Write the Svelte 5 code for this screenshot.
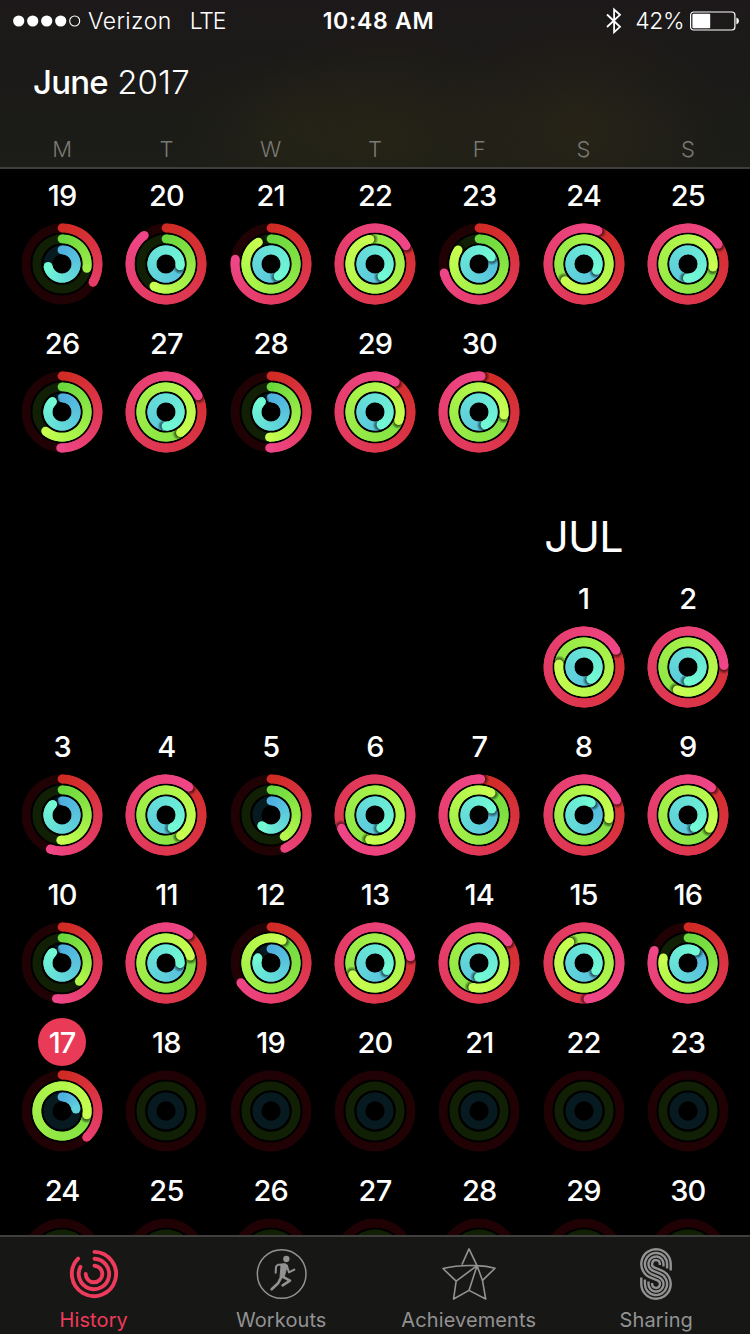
<script>
  const weekdays = ["M", "T", "W", "T", "F", "S", "S"];

  // each day: [number, move, exercise, stand], 1 = goal reached once
  const june = [
    [
      [19, 0.335, 0.278, 0.723],
      [20, 0.897, 0.58, 1.27],
      [21, 0.772, 0.917, 1.415],
      [22, 1.166, 1.968, 1.418],
      [23, 0.71, 0.845, 1.168],
      [24, 1.064, 1.636, 1.325],
      [25, 1.158, 1.27, 1.508],
    ],
    [
      [26, 0.506, 0.613, 0.883],
      [27, 1.176, 1.403, 1.5],
      [28, 0.506, 0.51, 0.883],
      [29, 1.095, 1.306, 1.43],
      [30, 1.01, 1.27, 1.43],
      null,
      null,
    ],
  ];

  const july = [
    [null, null, null, null, null, [1, 1.174, 1.77, 1.42], [2, 1.244, 1.571, 1.5]],
    [
      [3, 0.553, 0.508, 0.886],
      [4, 1.11, 1.403, 1.43],
      [5, 0.438, 0.413, 0.614],
      [6, 1.69, 1.535, 1.434],
      [7, 1.008, 1.08, 1.18],
      [8, 1.182, 1.275, 1.087],
      [9, 1.114, 1.34, 1.425],
    ],
    [
      [10, 0.525, 0.38, 0.886],
      [11, 1.108, 1.207, 1.258],
      [12, 0.658, 1.074, 0.81],
      [13, 1.223, 1.674, 1.34],
      [14, 1.15, 1.54, 1.505],
      [15, 1.483, 1.906, 1.344],
      [16, 0.807, 0.783, 1.09],
    ],
    [[17, 0.38, 1.275, 0.228], ...[18, 19, 20, 21, 22, 23].map(n => [n, 0, 0, 0])],
    [24, 25, 26, 27, 28, 29, 30].map(n => [n, 0, 0, 0]),
  ];

  const today = 17;

  const rings = [
    { r: 36, w: 8.8, from: [208, 43, 36], to: [239, 70, 137], track: "#200205" },
    { r: 25.2, w: 8.7, from: [108, 216, 62], to: [200, 255, 80], track: "#112005" },
    { r: 14.1, w: 8.9, from: [80, 176, 224], to: [114, 250, 212], track: "#071a20" },
  ];

  const STEP = 1 / 48;

  function point(r, t) {
    const a = t * 2 * Math.PI;
    return [(r * Math.sin(a)).toFixed(3), (-r * Math.cos(a)).toFixed(3)];
  }

  function color(ring, value, t) {
    const k = (t / value) * Math.min(1, value * 2);
    return `rgb(${ring.from.map((c, i) => Math.round(c + (ring.to[i] - c) * k)).join(",")})`;
  }

  // short arcs, each reaching over the next one; only the last full turn is visible
  function segments(ring, value) {
    const out = [];
    for (let t = Math.max(0, value - 1); t < value; t += STEP) {
      const end = Math.min(value, t + STEP * 2);
      const [x1, y1] = point(ring.r, t);
      const [x2, y2] = point(ring.r, end);
      out.push({
        d: `M${x1} ${y1}A${ring.r} ${ring.r} 0 0 1 ${x2} ${y2}`,
        stroke: color(ring, value, t),
      });
    }
    return out;
  }

  function annulus(r, w) {
    return [r + w / 2, r - w / 2]
      .map(q => `M0 ${-q}A${q} ${q} 0 1 1 0 ${q}A${q} ${q} 0 1 1 0 ${-q}Z`)
      .join("");
  }

  const stripes = [[14.7, 3.9, 6.5, 1], [11.1, 7.5, 4.5, 2.5], [7.5, 11.1, 2.5, 4.5], [3.9, 14.7, 1, 6.5]];

  function stripe([a, b, s, e]) {
    const [nx, ny] = [0.367, 0.93];
    return `M${16 + a} ${16 + s}V16A${a} ${a} 0 1 0 ${16 - a * nx} ${16 + a * ny}`
      + `L${16 + b * nx} ${36 - b * ny}A${b} ${b} 0 1 1 ${16 - b} 36V${36 - e}`;
  }
</script>

{#snippet activity(values)}
  <svg class="rings" viewBox="-41 -41 82 82">
    {#each rings as ring, i}
      {@const v = values[i]}
      <circle r={ring.r} fill="none" stroke={ring.track} stroke-width={ring.w} />
      {#if v > 0}
        {@const [tx, ty] = point(ring.r, v)}
        {@const [sx, sy] = point(ring.r, v + 1.6 / (2 * Math.PI * ring.r))}
        {#if v < 1}
          <circle cx="0" cy={-ring.r} r={ring.w / 2} fill={color(ring, v, 0)} />
        {/if}
        {#each segments(ring, v) as s, n}
          <path d={s.d} fill="none" stroke={s.stroke} stroke-width={ring.w} />
          {#if n === 10 && v > 0.8}
            <g clip-path="url(#clip{i})">
              <circle cx={sx} cy={sy} r="7" fill="url(#shade)" />
            </g>
          {/if}
        {/each}
        <circle cx={tx} cy={ty} r={ring.w / 2} fill={color(ring, v, v)} />
      {/if}
    {/each}
  </svg>
{/snippet}

{#snippet week(days)}
  <div class="week">
    {#each days as day}
      <div class="day">
        {#if day}
          <div class="num"><span class:today={day[0] === today && day[1] > 0}>{day[0]}</span></div>
          {@render activity(day.slice(1))}
        {/if}
      </div>
    {/each}
  </div>
{/snippet}

<svg class="defs" aria-hidden="true">
  <defs>
    <radialGradient id="shade">
      <stop offset="0.45" stop-color="#000" stop-opacity="0.6" />
      <stop offset="1" stop-color="#000" stop-opacity="0" />
    </radialGradient>
    {#each rings as ring, i}
      <clipPath id="clip{i}"><path d={annulus(ring.r, ring.w)} clip-rule="evenodd" /></clipPath>
    {/each}
  </defs>
</svg>

<main>
  <header>
    <div class="status">
      <div class="carrier">
        <svg width="68" height="12" viewBox="0 0 68 12">
          {#each [0, 1, 2, 3] as n}
            <circle cx={5.7 + n * 14} cy="6" r="5.6" fill="#fff" />
          {/each}
          <circle cx="61.7" cy="6" r="5" fill="none" stroke="#fff" stroke-width="1.1" />
        </svg>
        <span class="name">Verizon</span>
        <span class="net">LTE</span>
      </div>
      <div class="clock">10:48 AM</div>
      <div class="power">
        <svg width="16" height="28" viewBox="0 0 16 28">
          <path d="M1 7.5L14 19.8L8.1 25.2V2.6L14 7.8L1 20" fill="none" stroke="#fff" stroke-width="1.8" />
        </svg>
        <span class="pct">42%</span>
        <svg width="50" height="20" viewBox="0 0 50 20">
          <rect x="0.6" y="1" width="44.3" height="18" rx="3" fill="none" stroke="#fff" stroke-width="1.2" />
          <rect x="2.4" y="2.8" width="17.8" height="14.4" rx="1" fill="#fff" />
          <path d="M46.4 6.6Q49 7.5 49 10T46.4 13.4Z" fill="#fff" />
        </svg>
      </div>
    </div>
    <h1><b>June</b> 2017</h1>
    <div class="weekdays">
      {#each weekdays as w}
        <span>{w}</span>
      {/each}
    </div>
  </header>

  <section class="calendar">
    {#each june as days}
      {@render week(days)}
    {/each}
    <div class="month"><span>JUL</span></div>
    {#each july as days}
      {@render week(days)}
    {/each}
  </section>

  <nav>
    <div class="tab active">
      <svg width="54" height="54" viewBox="-27 -27 54 54" fill="none" stroke="currentColor" stroke-width="3.9" stroke-linecap="round">
        <path d="M0.5 -22.1A22.1 22.1 0 1 1 -15.9 -15.4" />
        <path d="M0.5 -15.2A15.2 15.2 0 1 1 -13.5 -7.1" />
        <path d="M0.5 -8.3A8.3 8.3 0 1 1 -8.3 0" />
      </svg>
      <span>History</span>
    </div>
    <div class="tab">
      <svg width="54" height="54" viewBox="-8 -6 162 162" fill="none" stroke="currentColor" stroke-linecap="round" stroke-linejoin="round">
        <circle cx="75" cy="75" r="73" stroke-width="4.5" />
        <circle cx="89" cy="30" r="9.5" fill="currentColor" stroke="none" />
        <path d="M64 46L85 44L93 49L88 64L82 86L70 84L73 52Z" fill="currentColor" stroke-width="3" />
        <path d="M63 48L58 53L57 71" stroke-width="6" />
        <path d="M91 52L97 70L113 62" stroke-width="6" />
        <path d="M76 82L100 95L78 109" stroke-width="8" />
        <path d="M73 86L64 103L45 121" stroke-width="8" />
      </svg>
      <span>Workouts</span>
    </div>
    <div class="tab">
      <svg width="58" height="56" viewBox="-4 -3 174 168" fill="none" stroke="currentColor" stroke-width="5" stroke-linejoin="round">
        <path d="M61 52L83 3L108 55Q137 56 164 63L125 101L135 159L83 132L35 159L43 103L2 64Q50 52 108 55" />
        <path d="M43 103L108 55L83 132M108 55L125 101" />
      </svg>
      <span>Achievements</span>
    </div>
    <div class="tab">
      <svg width="32" height="52" viewBox="0 0 32 52" fill="none" stroke="currentColor" stroke-width="2.4">
        {#each stripes as s}
          <path d={stripe(s)} />
        {/each}
      </svg>
      <span>Sharing</span>
    </div>
  </nav>
</main>

<style>
:global(body) {
  background: #000;
}

main {
  width: 750px;
  height: 1334px;
  display: flex;
  flex-direction: column;
  overflow: hidden;
  background: #000;
  color: #fff;
  font-family: Inter, "Liberation Sans", sans-serif;
}

.defs {
  position: absolute;
  width: 0;
  height: 0;
}

header {
  flex: none;
  height: 169px;
  box-sizing: border-box;
  border-bottom: 2px solid #3f3e3c;
  background:
    radial-gradient(ellipse 110px 80px at 280px 130px, rgba(44, 42, 20, 0.35), transparent),
    radial-gradient(ellipse 150px 110px at 385px 135px, rgba(44, 40, 20, 0.6), transparent),
    radial-gradient(ellipse 150px 110px at 575px 130px, rgba(46, 40, 22, 0.6), transparent),
    linear-gradient(#1d191a, #1b1a18 50%, #1c1d18);
}

.status {
  height: 42px;
  display: grid;
  grid-template-columns: 1fr auto 1fr;
  align-items: center;
  padding: 0 10px 0 13px;
  font-size: 23px;
}

.carrier, .power {
  display: flex;
  align-items: center;
}

.name {
  margin-left: 7px;
  font-weight: 350;
  letter-spacing: 0.4px;
}

.net {
  margin-left: 18px;
  font-weight: 350;
  letter-spacing: -1.1px;
}

.clock {
  margin-left: 4px;
  font-weight: 600;
  letter-spacing: 0.7px;
}

.power {
  justify-content: flex-end;
}

.pct {
  margin: 0 6px 0 13px;
  font-weight: 350;
  letter-spacing: -0.5px;
}

h1 {
  margin: 19px 0 0 33px;
  font-size: 33px;
  line-height: 42px;
  font-weight: 280;
  letter-spacing: 0.1px;
}

h1 b {
  font-weight: 550;
  letter-spacing: -0.8px;
}

.weekdays {
  display: grid;
  grid-template-columns: repeat(7, 1fr);
  margin-top: 32px;
  padding: 0 10px;
  font-size: 22px;
  line-height: 28px;
  font-weight: 300;
  text-align: center;
  color: #7a7974;
}

.calendar {
  flex: 1;
  min-height: 0;
  overflow: hidden;
  padding: 0 10px;
}

.week {
  display: grid;
  grid-template-columns: repeat(7, 1fr);
  height: 148px;
}

.day {
  display: flex;
  flex-direction: column;
  align-items: center;
}

.num {
  display: flex;
  align-items: center;
  box-sizing: border-box;
  height: 54px;
  padding-bottom: 2px;
  font-size: 29px;
  font-weight: 500;
  letter-spacing: -0.8px;
}

.today {
  width: 48px;
  height: 48px;
  line-height: 50px;
  border-radius: 50%;
  background: #e93a58;
  text-align: center;
}

.rings {
  width: 82px;
  height: 82px;
}

.month {
  display: grid;
  grid-template-columns: repeat(7, 1fr);
  height: 107px;
  font-size: 43px;
  line-height: 143px;
  font-weight: 400;
  letter-spacing: -0.7px;
}

.month span {
  grid-column: 6;
  text-align: center;
}

nav {
  flex: none;
  display: grid;
  grid-template-columns: repeat(4, 1fr);
  box-sizing: border-box;
  height: 99px;
  border-top: 2px solid #3f3f3e;
  background: #171716;
}

.tab {
  display: flex;
  flex-direction: column;
  align-items: center;
  color: #929292;
  font-size: 20px;
  letter-spacing: 0.1px;
}

.tab svg {
  height: 54px;
  margin-top: 10px;
}

.tab span {
  margin-top: 6px;
  line-height: 26px;
}

.active {
  color: #ee3a5b;
}
</style>
